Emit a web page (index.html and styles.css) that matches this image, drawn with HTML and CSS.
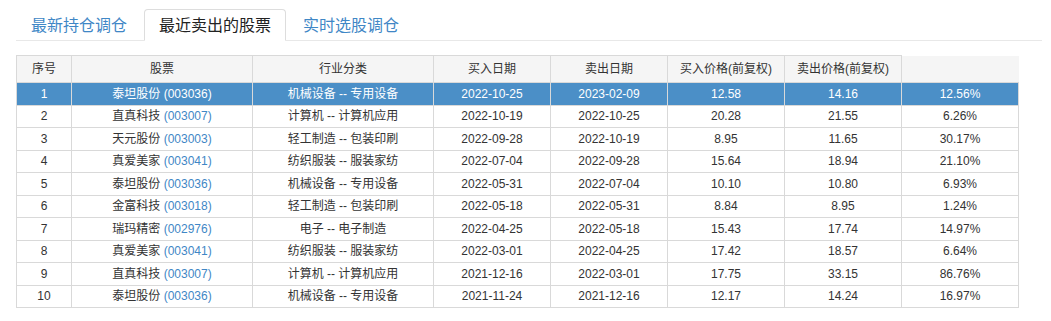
FILE: index.html
```html
<!DOCTYPE html>
<html lang="zh-CN">
<head>
<meta charset="utf-8">
<title>最近卖出的股票</title>
<link rel="stylesheet" href="styles.css">
</head>
<body>
<div class="wrap">
  <ul class="tabs">
    <li class="tab"><a>最新持仓调仓</a></li>
    <li class="tab active"><a>最近卖出的股票</a></li>
    <li class="tab"><a>实时选股调仓</a></li>
  </ul>
  <table class="grid">
    <colgroup>
      <col class="c-no"><col class="c-wide"><col class="c-wide">
      <col class="c-n"><col class="c-n"><col class="c-n"><col class="c-n"><col class="c-n">
    </colgroup>
    <thead>
      <tr><th>序号</th><th>股票</th><th>行业分类</th><th>买入日期</th><th>卖出日期</th><th>买入价格(前复权)</th><th>卖出价格(前复权)</th><th class="blank"></th></tr>
    </thead>
    <tbody>
      <tr class="sel"><td>1</td><td>泰坦股份 <span class="code">(003036)</span></td><td>机械设备 -- 专用设备</td><td>2022-10-25</td><td>2023-02-09</td><td>12.58</td><td>14.16</td><td>12.56%</td></tr>
      <tr><td>2</td><td>直真科技 <span class="code">(003007)</span></td><td>计算机 -- 计算机应用</td><td>2022-10-19</td><td>2022-10-25</td><td>20.28</td><td>21.55</td><td>6.26%</td></tr>
      <tr><td>3</td><td>天元股份 <span class="code">(003003)</span></td><td>轻工制造 -- 包装印刷</td><td>2022-09-28</td><td>2022-10-19</td><td>8.95</td><td>11.65</td><td>30.17%</td></tr>
      <tr><td>4</td><td>真爱美家 <span class="code">(003041)</span></td><td>纺织服装 -- 服装家纺</td><td>2022-07-04</td><td>2022-09-28</td><td>15.64</td><td>18.94</td><td>21.10%</td></tr>
      <tr><td>5</td><td>泰坦股份 <span class="code">(003036)</span></td><td>机械设备 -- 专用设备</td><td>2022-05-31</td><td>2022-07-04</td><td>10.10</td><td>10.80</td><td>6.93%</td></tr>
      <tr><td>6</td><td>金富科技 <span class="code">(003018)</span></td><td>轻工制造 -- 包装印刷</td><td>2022-05-18</td><td>2022-05-31</td><td>8.84</td><td>8.95</td><td>1.24%</td></tr>
      <tr><td>7</td><td>瑞玛精密 <span class="code">(002976)</span></td><td>电子 -- 电子制造</td><td>2022-04-25</td><td>2022-05-18</td><td>15.43</td><td>17.74</td><td>14.97%</td></tr>
      <tr><td>8</td><td>真爱美家 <span class="code">(003041)</span></td><td>纺织服装 -- 服装家纺</td><td>2022-03-01</td><td>2022-04-25</td><td>17.42</td><td>18.57</td><td>6.64%</td></tr>
      <tr><td>9</td><td>直真科技 <span class="code">(003007)</span></td><td>计算机 -- 计算机应用</td><td>2021-12-16</td><td>2022-03-01</td><td>17.75</td><td>33.15</td><td>86.76%</td></tr>
      <tr><td>10</td><td>泰坦股份 <span class="code">(003036)</span></td><td>机械设备 -- 专用设备</td><td>2021-11-24</td><td>2021-12-16</td><td>12.17</td><td>14.24</td><td>16.97%</td></tr>
    </tbody>
  </table>
</div>
</body>
</html>
```
FILE: styles.css
```css
html, body {
  margin: 0;
  padding: 0;
  background: #fff;
}
body {
  font-family: "Liberation Sans", Arial, "Noto Sans CJK SC", sans-serif;
  color: #333;
}
.wrap {
  padding: 9px 9px 0 16px;
}
.tabs {
  list-style: none;
  margin: 0;
  padding: 0;
  display: flex;
  border-bottom: 1px solid #e8e8e8;
}
.tab {
  margin: 0 2px -1px 0;
}
.tab a {
  display: block;
  font-size: 16px;
  line-height: 20px;
  padding: 6px 14px 4px;
  border: 1px solid transparent;
  border-radius: 4px 4px 0 0;
  color: #3f87c6;
  cursor: pointer;
}
.tab.active a {
  color: #222;
  background: #fff;
  border-color: #ddd #ddd transparent;
}
.grid {
  margin-top: 14px;
  border-collapse: collapse;
  table-layout: fixed;
  width: 1003px;
  font-size: 12px;
}
.c-no { width: 55px; }
.c-wide { width: 181px; }
.c-n { width: 117px; }
.grid th, .grid td {
  border: 1px solid #d9d9d9;
  text-align: center;
  line-height: 18px;
  white-space: nowrap;
  overflow: hidden;
}
.grid th {
  font-weight: normal;
  background: #f5f5f5;
  padding: 4px 2px;
  color: #333;
}
.grid th.blank {
  border-top: none;
  border-right: none;
}
.grid td {
  padding: 1.75px 2px;
}
.code {
  color: #3f87c6;
}
.grid tr.sel td {
  background: #4b8fc7;
  color: #fff;
  border-color: #d9d9d9;
}
.grid tr.sel .code {
  color: #fff;
}
```
